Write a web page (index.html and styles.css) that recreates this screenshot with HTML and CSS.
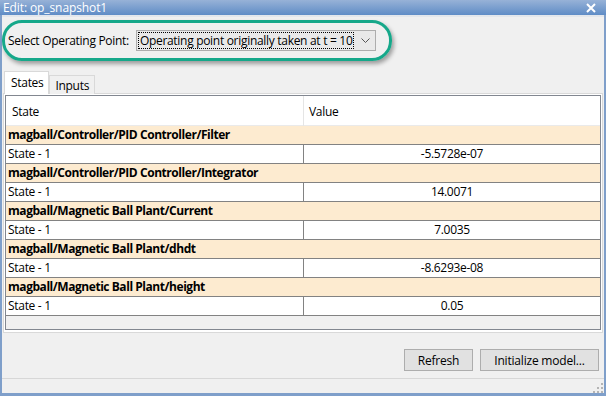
FILE: index.html
```html
<!DOCTYPE html>
<html lang="en">
<head>
    <meta charset="UTF-8">
    <title>Edit: op_snapshot1</title>
    <link rel="stylesheet" href="styles.css">
</head>
<body>
    <div class="window">
        <div class="titlebar">
            <span class="title">Edit: op_snapshot1</span>
            <svg class="close" width="10" height="10" viewBox="0 0 10 10">
                <path d="M1 1 L9 9 M9 1 L1 9" stroke="#fff" stroke-width="2"/>
            </svg>
        </div>
        <div class="client">
            <div class="highlight">
                <span class="label">Select Operating Point:</span>
                <div class="combo">
                    <span class="combo-text">Operating point originally taken at t = 10</span>
                    <svg class="chevron" width="9" height="5" viewBox="0 0 9 5">
                        <path d="M0.5 0.5 L4.5 4.5 L8.5 0.5" fill="none" stroke="#555" stroke-width="1"/>
                    </svg>
                </div>
            </div>

            <div class="tabs">
                <div class="tab active">States</div>
                <div class="tab">Inputs</div>
            </div>

            <div class="pane">
                <div class="table">
                    <div class="head">
                        <div class="hcell">State</div>
                        <div class="hcell">Value</div>
                    </div>

                    <div class="group">magball/Controller/PID Controller/Filter</div>
                    <div class="row"><div class="cell">State - 1</div><div class="cell num">-5.5728e-07</div></div>

                    <div class="group">magball/Controller/PID Controller/Integrator</div>
                    <div class="row"><div class="cell">State - 1</div><div class="cell num">14.0071</div></div>

                    <div class="group">magball/Magnetic Ball Plant/Current</div>
                    <div class="row"><div class="cell">State - 1</div><div class="cell num">7.0035</div></div>

                    <div class="group">magball/Magnetic Ball Plant/dhdt</div>
                    <div class="row"><div class="cell">State - 1</div><div class="cell num">-8.6293e-08</div></div>

                    <div class="group">magball/Magnetic Ball Plant/height</div>
                    <div class="row"><div class="cell">State - 1</div><div class="cell num">0.05</div></div>

                    <div class="filler"></div>
                </div>
            </div>

            <div class="actions">
                <button class="btn refresh">Refresh</button>
                <button class="btn init">Initialize model...</button>
            </div>

            <div class="statusbar">
                <svg class="grip" width="10" height="10" viewBox="0 0 10 10">
                    <rect x="8" y="0" width="2" height="2" fill="#b4b4b4"/>
                    <rect x="4" y="4" width="2" height="2" fill="#b4b4b4"/>
                    <rect x="8" y="4" width="2" height="2" fill="#b4b4b4"/>
                    <rect x="0" y="8" width="2" height="2" fill="#b4b4b4"/>
                    <rect x="4" y="8" width="2" height="2" fill="#b4b4b4"/>
                    <rect x="8" y="8" width="2" height="2" fill="#b4b4b4"/>
                </svg>
            </div>
        </div>
    </div>
</body>
</html>
```

FILE: styles.css
```css
body {
    margin: 0;
    font-family: "Open Sans", "Noto Sans", sans-serif;
    font-size: 12px;
    letter-spacing: -0.3px;
    color: #000;
}
.window {
    width: 606px;
    height: 396px;
    display: flex;
    flex-direction: column;
    background: #7f9fca;
}
.titlebar {
    height: 15px;
    flex: none;
    display: flex;
    align-items: center;
    justify-content: space-between;
    padding: 0 10px 0 3px;
    background: linear-gradient(#97b2d7, #5f8cc6);
    color: #fff;
}
.title {
    line-height: 15px;
    letter-spacing: -0.1px;
}
.close {
    display: block;
}
.client {
    flex: 1;
    display: flex;
    flex-direction: column;
    margin: 0 2px 3px 2px;
    background: #f0f0f0;
    border-top: 2px solid #e3e7ec;
}
.highlight {
    align-self: flex-start;
    display: flex;
    align-items: center;
    gap: 7px;
    margin-top: 3px;
    height: 35px;
    padding: 0 13px 0 3px;
    border: 3px solid #16a88a;
    border-radius: 20px;
    box-shadow: 2px 3px 4px rgba(0, 0, 0, 0.35);
}
.combo {
    display: flex;
    align-items: center;
    width: 237px;
    height: 19px;
    padding: 0 0 0 1px;
    border: 1px solid #adadad;
    background: #e9e9e9;
}
.combo-text {
    border: 1px dotted #000;
    padding: 0 1px;
    line-height: 15px;
    white-space: nowrap;
}
.chevron {
    margin-left: auto;
    margin-right: 5px;
}
.tabs {
    display: flex;
    align-items: flex-end;
    margin: 11px 0 -1px 2px;
    height: 22px;
    position: relative;
}
.tab {
    height: 18px;
    padding: 0 5px;
    line-height: 19px;
    border: 1px solid #d9d9d9;
    border-bottom: none;
    background: #f0f0f0;
}
.tab.active {
    height: 22px;
    padding: 0 5px 0 6px;
    line-height: 22px;
    background: #fff;
}
.pane {
    height: 236px;
    margin: 0 1px 0 1px;
    padding: 1px;
    border: 1px solid #d9d9d9;
    background: #fff;
}
.table {
    height: 233px;
    display: flex;
    flex-direction: column;
    border: 1px solid #828790;
    background: #f0f0f0;
}
.head {
    display: grid;
    grid-template-columns: 297px 1fr;
    height: 29px;
    background: #fff;
    border-bottom: 1px solid #eaeaea;
}
.hcell {
    padding-left: 6px;
    line-height: 31px;
}
.hcell + .hcell {
    border-left: 1px solid #e5e5e5;
    padding-left: 5px;
}
.group {
    height: 18px;
    line-height: 18px;
    padding-left: 2px;
    font-weight: bold;
    letter-spacing: -0.45px;
    background: #fdebd0;
}
.row {
    display: grid;
    grid-template-columns: 297px 1fr;
    height: 18px;
    border-top: 1px solid #828282;
    border-bottom: 1px solid #828282;
    background: #fff;
}
.cell {
    padding-left: 2px;
    line-height: 18px;
}
.cell.num {
    border-left: 1px solid #828282;
    text-align: center;
    padding-left: 0;
}
.filler {
    flex: 1;
}
.actions {
    display: flex;
    justify-content: flex-end;
    gap: 7px;
    margin-top: 16px;
    padding-right: 5px;
}
.btn {
    height: 22px;
    font: inherit;
    letter-spacing: -0.2px;
    color: #000;
    background: #e1e1e1;
    border: 1px solid #adadad;
    padding: 0;
}
.refresh {
    width: 69px;
}
.init {
    width: 119px;
}
.statusbar {
    margin-top: auto;
    height: 14px;
    border-top: 1px solid #d7d7d7;
    display: flex;
    justify-content: flex-end;
    align-items: flex-end;
    padding: 0 1px 0 0;
}
.grip {
    display: block;
}
```
